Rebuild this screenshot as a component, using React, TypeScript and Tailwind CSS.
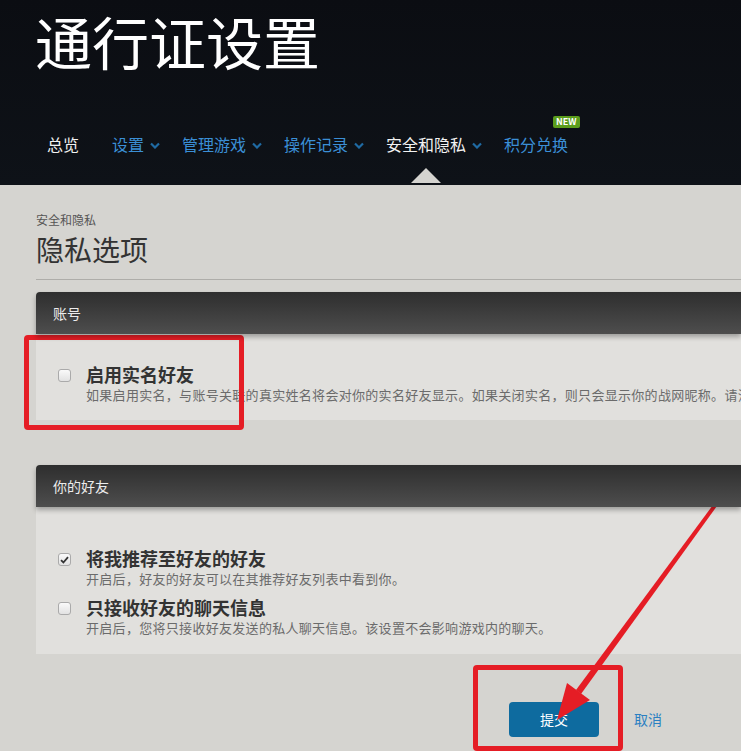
import React from 'react'

const FONT = { fontFamily: '"Noto Sans CJK SC", "Noto Sans", sans-serif' }

type NavItem = { label: string; active?: boolean; menu?: boolean; badge?: string }

const NAV: NavItem[] = [
  { label: '总览', active: true },
  { label: '设置', menu: true },
  { label: '管理游戏', menu: true },
  { label: '操作记录', menu: true },
  { label: '安全和隐私', active: true, menu: true },
  { label: '积分兑换', badge: 'NEW' },
]

function Chevron() {
  return (
    <svg width="10" height="7" viewBox="0 0 10 7" className="ml-[6px] mt-[2px]">
      <path d="M1 1.5 L5 5.5 L9 1.5" fill="none" stroke="#1f6aa3" strokeWidth="2.2" />
    </svg>
  )
}

function Checkbox({ checked }: { checked?: boolean }) {
  return (
    <span className="flex h-[13px] w-[13px] shrink-0 items-center justify-center rounded-[3px] border border-[#aaa] bg-gradient-to-b from-[#fafafa] to-[#e2e2e2]">
      {checked && (
        <svg width="9" height="8" viewBox="0 0 9 8">
          <path d="M1 4.2 L3.4 6.5 L8 1.2" fill="none" stroke="#333" strokeWidth="1.8" />
        </svg>
      )}
    </span>
  )
}

function Option({ title, desc, checked }: { title: string; desc: string; checked?: boolean }) {
  return (
    <div className="flex items-start">
      <div className="pl-[22px] pt-[5px]">
        <Checkbox checked={checked} />
      </div>
      <div className="ml-[15px] min-w-0">
        <div className="text-[18px] font-bold leading-[21px] text-[#333]">{title}</div>
        <div className="mt-[1px] whitespace-nowrap text-[13px] leading-[17px] tracking-[0.3px] text-[#6b6b6b]">{desc}</div>
      </div>
    </div>
  )
}

function SectionBar({ title }: { title: string }) {
  return (
    <div className="relative z-10 flex h-[42px] items-center rounded-tl-[4px] bg-gradient-to-b from-[#2e2e2e] to-[#4e4e4e] pl-[17px] text-[14px] text-[#ececec] shadow-[0_3px_5px_rgba(0,0,0,0.3)]">
      {title}
    </div>
  )
}

export default function App() {
  return (
    <div className="relative h-[751px] w-[741px] overflow-hidden bg-[#d5d4d0]" style={FONT}>
      {/* top banner */}
      <header className="relative h-[185px] bg-gradient-to-b from-[#0b0d12] to-[#0e1218]">
        <h1 className="pl-[35px] pt-[8px] text-[57px] font-normal leading-[64px] text-white">通行证设置</h1>
        <nav className="mt-[60px] flex items-center pl-[47px] text-[16px]">
          {NAV.map((n, i) => (
            <div
              key={n.label}
              className={[
                'relative flex items-center',
                i === 0 ? 'mr-[33px]' : 'mr-[22px]',
                n.active ? 'text-[#f2f2f2]' : 'text-[#3b8fd6]',
              ].join(' ')}
            >
              <span>{n.label}</span>
              {n.menu && <Chevron />}
              {n.badge && (
                <span className="absolute -top-[16px] left-[49px] rounded-[2px] bg-[#5b9d1c] px-[3px] text-[9px] font-bold leading-[12px] text-white">
                  {n.badge}
                </span>
              )}
              {n.label === '安全和隐私' && (
                <span className="absolute left-[25px] top-[36px] h-0 w-0 border-b-[15px] border-l-[15px] border-r-[15px] border-transparent border-b-[#d5d4d0]" />
              )}
            </div>
          ))}
        </nav>
      </header>

      {/* page body */}
      <main className="pl-[36px]">
        <div className="pt-[27px] text-[12px] leading-[16px] text-[#555]">安全和隐私</div>
        <h2 className="mt-[4px] text-[28px] font-normal leading-[34px] text-[#333]">隐私选项</h2>
        <div className="mt-[13px] h-px bg-[#aeada9]" />

        <section className="mt-[12px]">
          <SectionBar title="账号" />
          <div className="h-[86px] bg-[#e1e0dd] pt-[30px]">
            <Option
              title="启用实名好友"
              desc="如果启用实名，与账号关联的真实姓名将会对你的实名好友显示。如果关闭实名，则只会显示你的战网昵称。请注意"
            />
          </div>
        </section>

        <section className="mt-[45px]">
          <SectionBar title="你的好友" />
          <div className="h-[147px] bg-[#e1e0dd] pt-[41px]">
            <div className="flex flex-col gap-[10px]">
              <Option checked title="将我推荐至好友的好友" desc="开启后，好友的好友可以在其推荐好友列表中看到你。" />
              <Option title="只接收好友的聊天信息" desc="开启后，您将只接收好友发送的私人聊天信息。该设置不会影响游戏内的聊天。" />
            </div>
          </div>
        </section>

        <div className="mt-[48px] flex items-center pl-[473px]">
          <button className="h-[35px] w-[90px] rounded-[4px] bg-[#0e6b9f] text-[14px] text-white">提交</button>
          <span className="ml-[35px] text-[14px] text-[#2a80c2]">取消</span>
        </div>
      </main>

      {/* red markup over the page */}
      <div className="pointer-events-none absolute left-[24px] top-[335px] h-[95px] w-[220px] rounded-[4px] border-[5px] border-[#e51d25]" />
      <div className="pointer-events-none absolute left-[473px] top-[665px] h-[86px] w-[150px] rounded-[4px] border-[5px] border-[#e51d25]" />
      <svg className="pointer-events-none absolute left-0 top-0" width="741" height="751" viewBox="0 0 741 751">
        <polygon points="727,486 730,488 581,694 576,690" fill="#e51d25" />
        <polygon points="557,720 567,683 590,700" fill="#e51d25" />
      </svg>
    </div>
  )
}
